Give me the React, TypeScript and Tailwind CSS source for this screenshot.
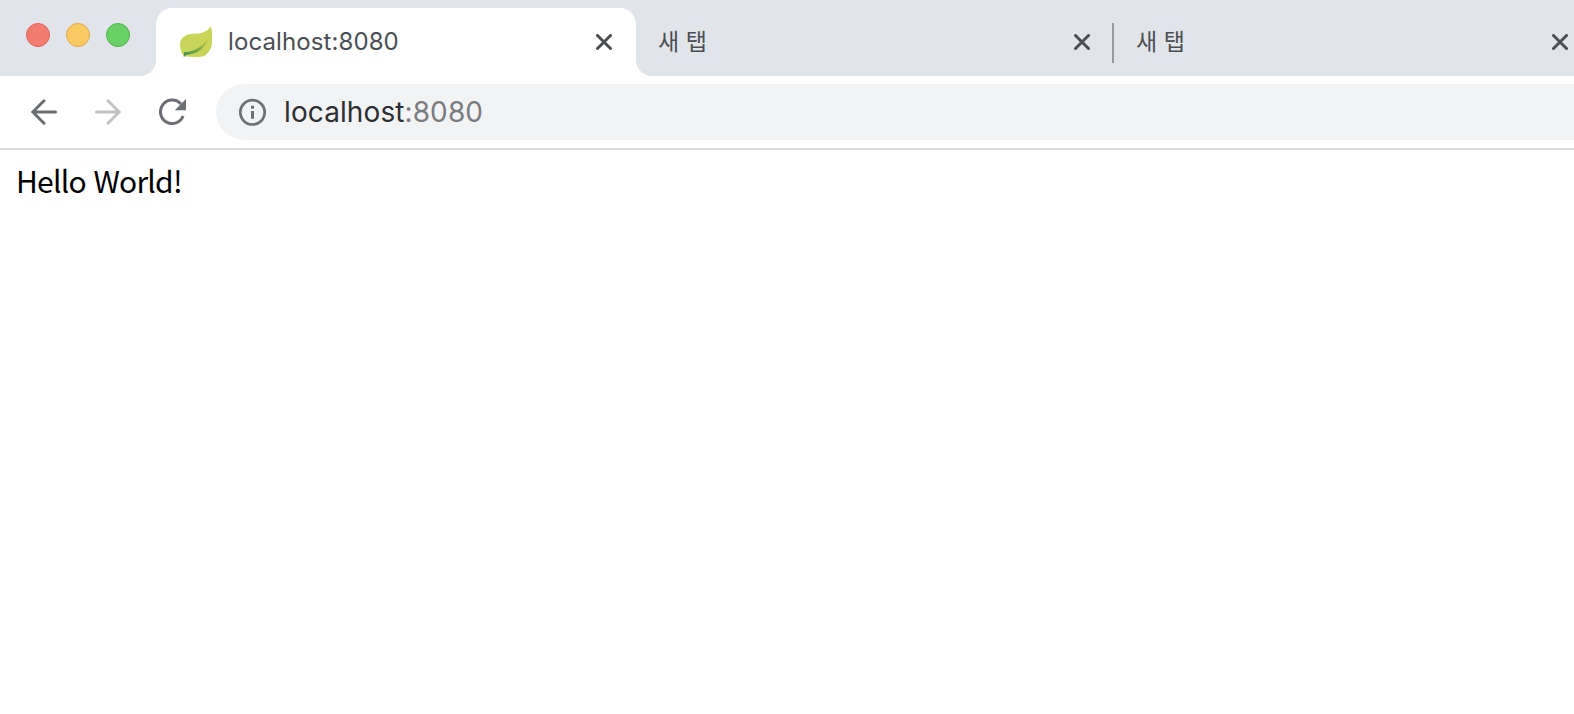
import { useState } from 'react'

const tabs = [
  { id: 2, title: '새 탭' },
  { id: 3, title: '새 탭' },
]

function LeafIcon() {
  return (
    <svg width="32" height="32" viewBox="0 0 32 32">
      <defs>
        <linearGradient id="vein" x1="0" y1="1" x2="1" y2="0">
          <stop offset="0" stopColor="#3f8f55" />
          <stop offset="0.5" stopColor="#76a846" />
          <stop offset="1" stopColor="#b3c850" />
        </linearGradient>
      </defs>
      <path
        d="M30.800.3C31.500 2 32 4.500 32 7.500v11c-1.200 5-4 9.500-8 11.600-3.500 1.400-12 1.200-19.600.2C1.800 28 0 24 0 18.500 0 13 4 9.500 9 8.200c4-1 9 .2 14-1.700C26.500 5.200 29 3 30.800.3z"
        fill="#c8d558"
      />
      <path
        d="M3.800 31.300C3.700 29 3.800 27.500 4.300 26c4.500.4 9-.9 13-3.400 4.500-2.700 7.700-5.500 10.200-9.100-1.300 5-4.700 9.300-9.500 12-4 2.300-8.500 2.500-12.200 3.600z"
        fill="url(#vein)"
      />
    </svg>
  )
}

function CloseIcon() {
  return (
    <svg width="16" height="16" viewBox="0 0 16 16" className="shrink-0">
      <path d="M1.500 1.500l13 13M14.500 1.500l-13 13" stroke="#4b4f53" strokeWidth="3" strokeLinecap="round" />
    </svg>
  )
}

function ArrowIcon({ className }: { className?: string }) {
  return (
    <svg width="26" height="26" viewBox="0 0 26 26" fill="none" className={className}>
      <path d="M24.500 13H2M13 1.800L1.800 13 13 24.200" stroke="currentColor" strokeWidth="3" strokeLinecap="round" />
    </svg>
  )
}

function ReloadIcon() {
  return (
    <svg width="28" height="28" viewBox="0 0 28 28" fill="none">
      <path d="M24.100 18A11.700 11.700 0 1 1 21.900 6" stroke="#6b6f74" strokeWidth="3" />
      <path d="M27 1v11.200H15.800z" fill="#6b6f74" />
    </svg>
  )
}

function InfoIcon() {
  return (
    <svg width="28" height="28" viewBox="0 0 28 28" fill="none">
      <circle cx="13.500" cy="14.300" r="12.200" stroke="#6f7073" strokeWidth="2.700" />
      <path d="M13.500 13.100v7.700M13.500 7.800v3" stroke="#6f7073" strokeWidth="3" />
    </svg>
  )
}

export default function App() {
  const [host] = useState('localhost')
  const port = ':8080'

  return (
    <div className="w-full h-[714px] overflow-hidden bg-white font-[Inter,'Noto_Sans_CJK_KR',sans-serif]">
      {/* tab strip */}
      <div className="flex h-[76px] bg-white">
        <div className="flex w-[156px] shrink-0 gap-4 rounded-br-2xl bg-[#e1e4e9] pl-[26px] pt-[23px]">
          <span className="size-6 rounded-full border border-[#e2635a] bg-[#f37c71]" />
          <span className="size-6 rounded-full border border-[#dfa94b] bg-[#f9ca61]" />
          <span className="size-6 rounded-full border border-[#4fb44d] bg-[#68d065]" />
        </div>

        <div className="w-[480px] shrink-0 bg-[linear-gradient(#e1e4e9_50%,#fff_50%)] pt-2">
          <div className="flex h-[68px] items-center rounded-t-2xl bg-white pl-6 pr-6">
            <LeafIcon />
            <span className="ml-4 flex-1 whitespace-nowrap text-[24px] leading-8 tracking-[0.1px] text-[#4b4f53]">
              {host}
              {port}
            </span>
            <CloseIcon />
          </div>
        </div>

        <div className="flex flex-1 rounded-bl-2xl bg-[#e1e4e9] pt-2">
          {tabs.map((tab, i) => (
            <div key={tab.id} className="flex w-[478px] shrink-0 items-center pl-[22px]">
              <span className="flex-1 whitespace-nowrap text-[23px] leading-8 text-[#4b4f53]">{tab.title}</span>
              <CloseIcon />
              <span className={i === 0 ? 'ml-[22px] mt-0.5 h-10 w-0.5 bg-[#98999c]' : 'ml-6'} />
            </div>
          ))}
        </div>
      </div>

      {/* toolbar */}
      <div className="flex h-[74px] items-center border-b-2 border-[#dddee2] pl-[31px]">
        <ArrowIcon className="text-[#6b6f74]" />
        <ArrowIcon className="ml-[38px] rotate-180 text-[#c1c2c4]" />
        <div className="ml-[38px]">
          <ReloadIcon />
        </div>
        <div className="ml-[29px] flex h-14 flex-1 items-center rounded-l-full bg-[#f2f3f5] pl-[23px]">
          <InfoIcon />
          <span className="ml-[17px] whitespace-nowrap text-[28px] leading-9 tracking-[0.1px] text-[#2d2f32]">
            {host}
            <span className="text-[#7b7c7f]">{port}</span>
          </span>
        </div>
      </div>

      <p className="px-4 pt-2.5 font-['Noto_Sans_CJK_KR',sans-serif] text-[30px] leading-10 tracking-[-0.75px] [word-spacing:1.5px] text-black">
        Hello World!
      </p>
    </div>
  )
}
